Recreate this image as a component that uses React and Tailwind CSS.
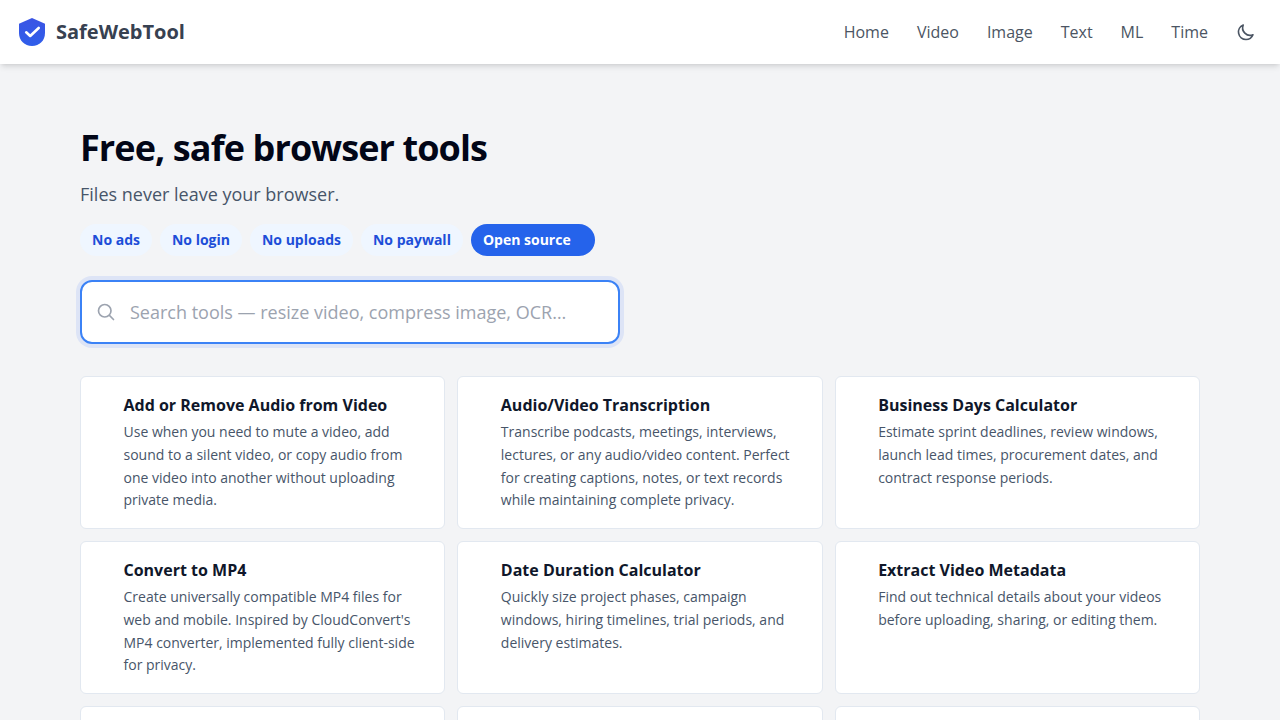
const NAV = ["Home", "Video", "Image", "Text", "ML", "Time"];

const BADGES = ["No ads", "No login", "No uploads", "No paywall"];

const TOOLS = [
  {
    name: "Add or Remove Audio from Video",
    text: "Use when you need to mute a video, add sound to a silent video, or copy audio from one video into another without uploading private media.",
  },
  {
    name: "Audio/Video Transcription",
    text: "Transcribe podcasts, meetings, interviews, lectures, or any audio/video content. Perfect for creating captions, notes, or text records while maintaining complete privacy.",
  },
  {
    name: "Business Days Calculator",
    text: "Estimate sprint deadlines, review windows, launch lead times, procurement dates, and contract response periods.",
  },
  {
    name: "Convert to MP4",
    text: "Create universally compatible MP4 files for web and mobile. Inspired by CloudConvert's MP4 converter, implemented fully client-side for privacy.",
  },
  {
    name: "Date Duration Calculator",
    text: "Quickly size project phases, campaign windows, hiring timelines, trial periods, and delivery estimates.",
  },
  {
    name: "Extract Video Metadata",
    text: "Find out technical details about your videos before uploading, sharing, or editing them.",
  },
];

function Logo() {
  return (
    <svg viewBox="0 0 32 32" className="h-8 w-8" fill="none">
      <defs>
        <linearGradient id="shield" x1="16" y1="2" x2="16" y2="30" gradientUnits="userSpaceOnUse">
          <stop stopColor="#3b54e4" />
          <stop offset="1" stopColor="#2f5eea" />
        </linearGradient>
      </defs>
      <path d="M16 2L29 7.800V17C29 24.500 23.500 30 16 30S3 24.500 3 17V7.800z" fill="url(#shield)" />
      <path d="M10.200 16.300l4 3.700 8.500-8" stroke="#fff" strokeWidth="2.600" strokeLinecap="round" strokeLinejoin="round" />
    </svg>
  );
}

function Header() {
  return (
    <header className="flex h-16 items-center justify-between bg-white pl-4 pr-6 shadow-md">
      <a href="#" className="flex items-center gap-2">
        <Logo />
        <span className="text-xl font-bold text-[#374151]">SafeWebTool</span>
      </a>
      <nav className="flex items-center gap-7 text-[#4b5563]">
        {NAV.map((item) => (
          <a key={item} href="#">
            {item}
          </a>
        ))}
        <button type="button" aria-label="Toggle theme">
          <svg viewBox="0 0 24 24" className="h-5 w-5" fill="none" stroke="currentColor" strokeWidth="2">
            <path
              strokeLinecap="round"
              strokeLinejoin="round"
              d="M20.354 15.354A9 9 0 018.646 3.646 9.003 9.003 0 0012 21a9.003 9.003 0 008.354-5.646z"
            />
          </svg>
        </button>
      </nav>
    </header>
  );
}

function SearchBox() {
  return (
    <div className="mt-6 flex h-16 w-[540px] items-center gap-3.5 rounded-xl border-2 border-[#3b82f6] bg-white px-3.5 ring-4 ring-[#dde4f6]">
      <svg viewBox="0 0 24 24" className="h-5 w-5 shrink-0 text-[#9ca3af]" fill="none" stroke="currentColor" strokeWidth="2">
        <path strokeLinecap="round" strokeLinejoin="round" d="M21 21l-5.197-5.197m0 0A7.500 7.500 0 105.196 5.196a7.500 7.500 0 0010.607 10.607z" />
      </svg>
      <input
        type="text"
        placeholder="Search tools — resize video, compress image, OCR…"
        className="w-full bg-transparent text-lg outline-none placeholder:text-[#9ca3af]"
      />
    </div>
  );
}

function ToolCard({ tool }) {
  return (
    <a href="#" className="block h-[153px] rounded-md border border-[#e2e8f0] bg-white pl-[42.500px] pr-6 pt-4">
      <h2 className="text-base font-bold text-[#0f172a]">{tool?.name}</h2>
      <p className="mt-1 text-sm leading-[22.750px] text-[#475569]">{tool?.text}</p>
    </a>
  );
}

export default function App() {
  return (
    <div className="h-screen overflow-hidden bg-[#f3f4f6] font-['Open_Sans',sans-serif]">
      <Header />
      <main className="mx-auto w-[1120px] pt-[61px]">
        <h1 className="text-4xl leading-[45px] font-bold tracking-tight text-[#020617]">Free, safe browser tools</h1>
        <p className="mt-2.5 text-lg text-[#475569]">Files never leave your browser.</p>
        <div className="mt-4 flex gap-2 text-sm font-bold">
          {BADGES.map((badge) => (
            <span key={badge} className="flex h-8 items-center rounded-full bg-[#eff6ff] px-3 text-[#1d4ed8]">
              {badge}
            </span>
          ))}
          <a href="#" className="flex h-8 items-center rounded-full bg-[#2563eb] pl-3 pr-6 text-white">
            Open source
          </a>
        </div>
        <SearchBox />
        <div className="mt-8 grid grid-cols-3 gap-3">
          {TOOLS.map((tool) => (
            <ToolCard key={tool.name} tool={tool} />
          ))}
          {/* next row, cut off by the fold */}
          <ToolCard />
          <ToolCard />
          <ToolCard />
        </div>
      </main>
    </div>
  );
}
